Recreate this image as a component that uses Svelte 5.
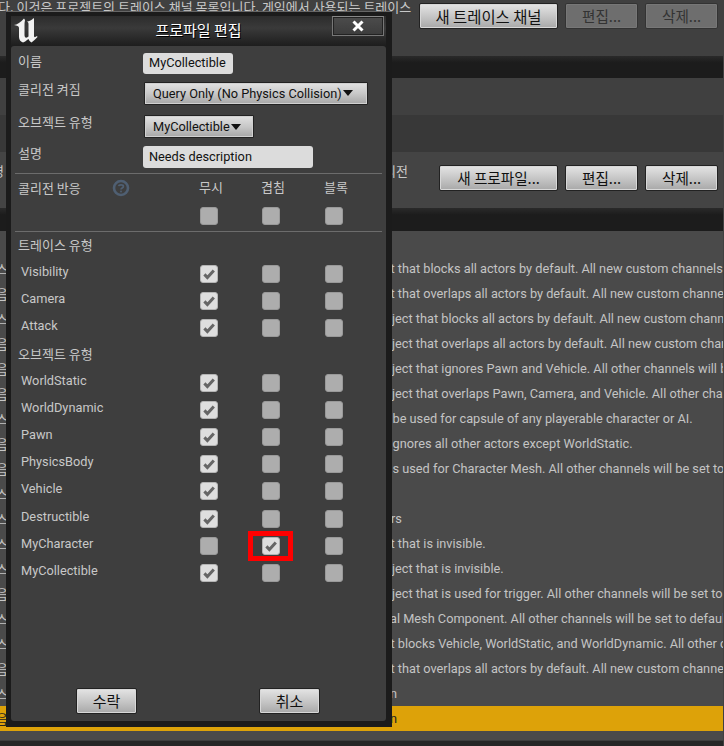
<script>
  const rows = [
    { pre: '', text: '' },
    { pre: '스', text: 't that blocks all actors by default. All new custom channels will use its own default response.', x: 390.5 },
    { pre: '음', text: 't that overlaps all actors by default. All new custom channels will use its own default response.', x: 390.5 },
    { pre: '스', text: 'ject that blocks all actors by default. All new custom channels will use its own default response.', x: 392 },
    { pre: '음', text: 'ject that overlaps all actors by default. All new custom channels will use its own default response.', x: 392 },
    { pre: '음', text: 'ject that ignores Pawn and Vehicle. All other channels will be set to default.', x: 392 },
    { pre: '음', text: 'ject that overlaps Pawn, Camera, and Vehicle. All other channels will be set to default.', x: 392 },
    { pre: '스', text: 'be used for capsule of any playerable character or AI.', x: 392.5 },
    { pre: '음', text: 'gnores all other actors except WorldStatic.', x: 392.5 },
    { pre: '음', text: 's used for Character Mesh. All other channels will be set to default.', x: 392.5 },
    { pre: '스', text: '' },
    { pre: '스', text: 'rs', x: 391 },
    { pre: '스', text: 't that is invisible.', x: 390.5 },
    { pre: '스', text: 'ject that is invisible.', x: 392 },
    { pre: '음', text: 'ject that is used for trigger. All other channels will be set to default.', x: 392 },
    { pre: '스', text: 'al Mesh Component. All other channels will be set to default.', x: 390 },
    { pre: '스', text: 't blocks Vehicle, WorldStatic, and WorldDynamic. All other channels will be set.', x: 390.5 },
    { pre: '음', text: 't that overlaps all actors by default. All new custom channels will use its own.', x: 390.5 },
    { pre: '스', text: 'n', x: 390 },
    { pre: '음', text: 'n', x: 390, sel: true }
  ];
  const trace = [
    { name: 'Visibility', c: 0 },
    { name: 'Camera', c: 0 },
    { name: 'Attack', c: 0 }
  ];
  const objects = [
    { name: 'WorldStatic', c: 0 },
    { name: 'WorldDynamic', c: 0 },
    { name: 'Pawn', c: 0 },
    { name: 'PhysicsBody', c: 0 },
    { name: 'Vehicle', c: 0 },
    { name: 'Destructible', c: 0 },
    { name: 'MyCharacter', c: 1, mark: true },
    { name: 'MyCollectible', c: 0 }
  ];
</script>

{#snippet checks(row)}
  <div class="checks">
    {#each [0, 1, 2] as i}
      <span class="cb" class:on={row.c === i} class:mark={row.mark && row.c === i}>
        {#if row.c === i}
          <svg viewBox="0 0 18 18" width="18" height="18"><path d="M4.4 9.4 7.4 12.6 13.8 5.6" fill="none" stroke="#666" stroke-width="3"/></svg>
        {/if}
      </span>
    {/each}
  </div>
{/snippet}

<div class="page">
  <section class="top">
    <p class="intro">다. 이것은 프로젝트의 트레이스 채널 목록입니다. 게임에서 사용되는 트레이스</p>
    <div class="actions">
      <button class="btn big">새 트레이스 채널</button>
      <button class="btn off">편집...</button>
      <button class="btn off">삭제...</button>
    </div>
  </section>
  <div class="bar"></div>
  <div class="band light"></div>
  <div class="band dark"></div>
  <section class="profile">
    <p class="intro2"><span>영</span><span>콜리전</span></p>
    <div class="actions">
      <button class="btn mid">새 프로파일...</button>
      <button class="btn">편집...</button>
      <button class="btn">삭제...</button>
    </div>
  </section>
  <div class="bar two"></div>
  <div class="list">
    {#each rows as r}
      <div class="row" class:sel={r.sel}>
        <span class="pre">{r.pre}</span>
        {#if r.text}<span class="desc" style="left:{r.x}px">{r.text}</span>{/if}
      </div>
    {/each}
  </div>
  <div class="tail"></div>
  <div class="foot"></div>
</div>

<div class="dialog">
  <header class="title">
    <svg class="logo" viewBox="0 0 26 26" width="26" height="26">
      <path d="M2 8C5 8 9 5 12 1.5L13 3C12.5 5 12.5 7 12.5 9V18C12.5 20 13.5 21 15 20.5L16.5 19.5V7C16.5 6 16 5 15 4.5C17 4.5 20 3 21.5 1L22 2V19C22 20.5 23 20.5 25 19L25.5 20C23.5 22 21.5 24 19.5 25.5C18 24.5 17 23.5 16.5 22C14.5 23.5 12.5 25 11 25.5C9 25 7 23 7 20V11C7 9 5 8.5 2 8Z" fill="#f2f2f2"/>
    </svg>
    <h1>프로파일 편집</h1>
    <button class="close" aria-label="닫기">
      <svg viewBox="0 0 12 12" width="12" height="12"><path d="M1.5 1.5 10.5 10.5M10.5 1.5 1.5 10.5" stroke="#fff" stroke-width="3"/></svg>
    </button>
  </header>
  <div class="panel">
    <div class="field f1">
      <label for="n">이름</label>
      <span id="n" class="input w90">MyCollectible</span>
    </div>
    <div class="field f2">
      <label for="c">콜리전 켜짐</label>
      <span id="c" class="select w224">Query Only (No Physics Collision)<i></i></span>
    </div>
    <div class="field f3">
      <label for="o">오브젝트 유형</label>
      <span id="o" class="select w110">MyCollectible<i></i></span>
    </div>
    <div class="field f4">
      <label for="d">설명</label>
      <span id="d" class="input w170">Needs description</span>
    </div>
    <hr class="rule first" />
    <div class="resp-head">
      <span class="heading">콜리전 반응</span>
      <svg class="help" viewBox="0 0 18 18" width="18" height="18"><circle cx="9" cy="9" r="7" fill="none" stroke="#4f5f72" stroke-width="2.6"/><path d="M6.6 7.2C6.8 5.6 11.4 5.4 11.4 7.5 11.4 9 9 9 9 10.6" fill="none" stroke="#4f5f72" stroke-width="1.7"/><circle cx="9" cy="12.6" r="1" fill="#4f5f72"/></svg>
      <span class="col c1">무시</span>
      <span class="col c2">겹침</span>
      <span class="col c3">블록</span>
    </div>
    <div class="all">{@render checks({ c: -1 })}</div>
    <hr class="rule" />
    <div class="heading sect">트레이스 유형</div>
    {#each trace as r}
      <div class="ch"><span>{r.name}</span>{@render checks(r)}</div>
    {/each}
    <div class="heading sect second">오브젝트 유형</div>
    {#each objects as r}
      <div class="ch"><span>{r.name}</span>{@render checks(r)}</div>
    {/each}
    <div class="buttons">
      <button class="btn small">수락</button>
      <button class="btn small">취소</button>
    </div>
  </div>
</div>

<style>
  :global(body) { margin: 0; background: #2b2b2b; }
  * { box-sizing: border-box; }
  .page {
    width: 724px; height: 746px; overflow: hidden; position: relative;
    font-family: "Noto Sans CJK KR", "Noto Sans", sans-serif;
    padding-right: 1px; background: #404040;
  }
  .top { height: 56px; background: #404040; position: relative; }
  .intro { margin: 0; position: absolute; left: -2px; top: -2px; font-size: 13px; line-height: 18px; color: #c8c8c8; white-space: nowrap; }
  .actions { position: absolute; right: 5px; top: 3px; display: flex; gap: 7px; }
  .btn {
    height: 26px; width: 73px; padding: 0; border: 1px solid #222; border-radius: 2px;
    background: linear-gradient(#e4e4e4, #c4c4c4 55%, #a8a8a8);
    color: #111; font-family: "Noto Sans CJK KR", sans-serif; font-size: 14.6px; line-height: 22px;
    box-shadow: inset 0 0 0 1px #d8d8d8;
  }
  .btn.big { width: 139px; font-size: 15.4px; }
  .btn.mid { width: 119px; }
  .btn.off { background: #6e6e6e; color: #333; box-shadow: inset 0 0 0 1px #777; border-color: #333; }
  .btn.small { width: 61px; font-size: 15px; }
  .bar { height: 22px; background: linear-gradient(#2a2a2a, #1c1c1c 30%, #1c1c1c); }
  .bar.two { height: 23px; }
  .band { height: 37px; }
  .band.light { background: #404040; }
  .band.dark { background: #383838; }
  .profile { height: 56px; background: #444; position: relative; }
  .profile .actions { top: 13px; }
  .intro2 { margin: 0; position: absolute; left: -8px; top: 10px; width: 416px; display: flex; justify-content: space-between; font-size: 13px; line-height: 18px; color: #c8c8c8; }
  .list { background: #4a4a4a; }
  .row { height: 25px; position: relative; font-family: Roboto, "Noto Sans CJK KR", sans-serif; font-size: 12.75px; line-height: 25px; color: #c4c4c4; white-space: nowrap; overflow: hidden; }
  .row.sel { background: #dda209; color: #222; }
  .pre { position: absolute; left: -4px; top: 0; font-family: "Noto Sans CJK KR", sans-serif; }
  .desc { position: absolute; top: 0; }
  .tail { height: 9px; background: #4a4a4a; }
  .foot { height: 6px; background: #262626; border-top: 1px solid #3e3e3e; }

  .dialog {
    position: absolute; left: 6px; top: 11px; width: 386px; height: 716px;
    background: #1b1b1b; padding: 4px 6px 6px 5px;
    display: flex; flex-direction: column;
    border-top: 1px solid #666;
    font-family: Roboto, "Noto Sans CJK KR", sans-serif; color: #c8c8c8;
  }
  .title { height: 30px; flex: none; position: relative; display: flex; justify-content: center; align-items: center;
    background: linear-gradient(#2c2c2c, #3a3a3a 40%, #1d1d1d); }
  .title h1 { margin: 0 0 3px; font-family: "Noto Sans CJK KR", sans-serif; font-weight: 400; font-size: 15px; color: #fff; text-shadow: 1px 1px 0 #000; }
  .logo { position: absolute; left: 1px; top: 1px; }
  .close { position: absolute; right: 2px; top: 0; width: 52px; height: 20px; padding: 0; border: 1px solid #777; border-top-color: #888; display: flex; align-items: center; justify-content: center;
    background: linear-gradient(#4c4c4c, #3c3c3c); box-shadow: inset 0 0 0 1px #222; }
  .panel { flex: 1; background: #3e3e3e; border-radius: 3px; display: flex; flex-direction: column; font-size: 12.75px; }
  .field { display: flex; align-items: center; flex: none; }
  .field label { width: 132px; padding-left: 7px; font-family: "Noto Sans CJK KR", sans-serif; font-size: 13px; line-height: 16px; }
  .f1 { margin-top: 7px; height: 21px; } .f1 label { padding-bottom: 6px; }
  .f2 { margin-top: 8px; height: 23px; } .f2 label { padding-bottom: 10px; }
  .f3 { margin-top: 10px; height: 23px; } .f3 label { padding-bottom: 10px; }
  .f4 { margin-top: 8px; height: 22px; } .f4 label { padding-bottom: 8px; }
  .input { height: 100%; background: #dcdcdc; border-radius: 3px; color: #111; padding-left: 6px; display: flex; align-items: center; line-height: 1; }
  .w90 { width: 90px; padding-bottom: 1px; } .w170 { width: 170px; }
  .select { height: 100%; margin-left: 1px; border: 1px solid #222; background: linear-gradient(#e2e2e2, #c8c8c8 50%, #a6a6a6); color: #111; padding-left: 8px; display: flex; align-items: center; box-shadow: inset 0 0 0 1px #d0d0d0; border-radius: 1px; }
  .select i { width: 0; height: 0; margin-left: 1px; border: 5px solid transparent; border-top: 6px solid #111; border-bottom: 0; }
  .w224 { width: 224px; padding-bottom: 1px; } .w110 { width: 110px; }
  .rule { margin: 0 4px; border: 0; height: 1px; background: #6c6c6c; flex: none; }
  .rule.first { margin-top: 5px; }
  .resp-head { height: 28px; flex: none; position: relative; }
  .heading { font-family: "Noto Sans CJK KR", sans-serif; font-size: 13px; line-height: 16px; padding-left: 7px; display: block; }
  .resp-head .heading { position: absolute; top: 6px; }
  .help { position: absolute; left: 101px; top: 5px; }
  .col { position: absolute; top: 5px; width: 40px; text-align: center; font-family: "Noto Sans CJK KR", sans-serif; font-size: 13px; line-height: 16px; }
  .c1 { left: 180px; } .c2 { left: 242px; } .c3 { left: 305px; }
  .all { height: 29px; flex: none; padding-top: 5px; }
  .sect { height: 33px; padding-top: 5px; flex: none; }
  .sect.second { height: 28px; margin-top: -1px; padding-top: 0; }
  .ch { height: 27.2px; flex: none; display: flex; position: relative; }
  .ch > span { padding-left: 10px; line-height: 14px; position: absolute; top: 0; }
  .checks { margin-left: 189px; display: flex; gap: 44px; }
  .checks .cb:nth-child(3) { margin-left: 1px; }
  .cb { width: 18px; height: 18px; background: #adadad; border-radius: 3px; border: 1px solid #999; position: relative; display: block; flex: none; }
  .cb.on { background: #dedede; border-color: #b4b4b4; }
  .cb svg { position: absolute; left: -1px; top: -1px; }
  .cb.mark::after { content: ""; box-sizing: border-box; position: absolute; left: -15px; top: -7px; width: 45px; height: 30px; border: 5px solid #f00; }
  .buttons { margin-top: auto; margin-bottom: 7px; padding-left: 65px; display: flex; gap: 122px; }
</style>
